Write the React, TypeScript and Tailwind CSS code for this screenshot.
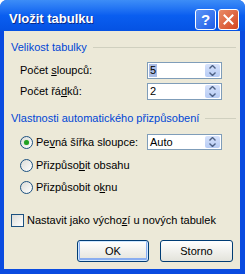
import React from "react";

const font = { fontFamily: '"Liberation Sans", Arial, sans-serif' };

function Spin({ value, selected, h }: { value: string; selected?: boolean; h: string }) {
  return (
    <div className={`ml-auto mr-[18px] flex w-[75px] ${h} border border-[#7f9db9] bg-white`}>
      <div className="flex flex-1 items-center pl-[1px] text-[11px] text-black">
        <span className={selected ? "bg-[#aabde6] px-[1px] leading-[13px]" : "px-[1px] leading-[13px]"}>{value}</span>
      </div>
      <div className="m-[1px] flex w-[15px] flex-col gap-0 overflow-hidden rounded-[2px] bg-gradient-to-b from-[#d6e2fb] to-[#b7ccf5]">
        <div className="flex flex-1 items-center justify-center">
          <svg width="7" height="4" viewBox="0 0 7 4">
            <path d="M0.5 3.5 L3.5 0.5 L6.5 3.5" fill="none" stroke="#4d6185" strokeWidth="1.4" />
          </svg>
        </div>
        <div className="flex flex-1 items-center justify-center">
          <svg width="7" height="4" viewBox="0 0 7 4">
            <path d="M0.5 0.5 L3.5 3.5 L6.5 0.5" fill="none" stroke="#4d6185" strokeWidth="1.4" />
          </svg>
        </div>
      </div>
    </div>
  );
}

function Radio({ checked }: { checked?: boolean }) {
  return (
    <div className="flex h-[13px] w-[13px] items-center justify-center rounded-full border border-[#1c5180] bg-gradient-to-br from-[#dcdcd7] to-white">
      {checked && <div className="h-[5px] w-[5px] rounded-full bg-[#21a121] shadow-[0_0_1px_#7fd07f]" />}
    </div>
  );
}

function Header({ children }: { children: React.ReactNode }) {
  return (
    <div className="flex h-[13px] items-center pl-[7px] pr-[4px]">
      <span className="text-[11px] leading-[13px] text-[#0046d5]">{children}</span>
      <div className="ml-[6px] h-[1px] flex-1 bg-[#d0d0bf]" />
    </div>
  );
}

export default function App() {
  return (
    <div style={font} className="h-[274px] w-[245px] overflow-hidden rounded-t-[7px] bg-[#0a4be0]">
      {/* Title bar */}
      <div className="flex h-[31px] items-center bg-gradient-to-b from-[#3d8df7] via-[#0a5ef0] to-[#0552e3] pl-[9px] pr-[6px] pt-[7px]">
        <span className="text-[13px] font-bold leading-[16px] text-white [text-shadow:1px_1px_0_#0a2a8a]">Vložit tabulku</span>
        <div className="ml-auto flex gap-[2px]">
          <div className="flex h-[21px] w-[21px] items-center justify-center rounded-[3px] border border-white bg-gradient-to-br from-[#5c94f7] to-[#1f5ce6] text-[15px] font-bold leading-none text-white">
            ?
          </div>
          <div className="flex h-[21px] w-[21px] items-center justify-center rounded-[3px] border border-white bg-gradient-to-br from-[#e88a66] to-[#d4431c]">
            <svg width="11" height="11" viewBox="0 0 11 11">
              <path d="M1.5 1.5 L9.5 9.5 M9.5 1.5 L1.5 9.5" stroke="white" strokeWidth="2" strokeLinecap="square" />
            </svg>
          </div>
        </div>
      </div>
      {/* Client */}
      <div className="ml-[4px] flex h-[238px] w-[236px] flex-col bg-[#ece9d8] text-[11px] text-black">
        <div className="mt-[10px]">
          <Header>Velikost tabulky</Header>
        </div>
        <div className="mt-[8px] flex h-[17px] items-center pl-[16px]">
          <span>Počet <u>s</u>loupců:</span>
          <Spin value="5" selected h="h-[17px]" />
        </div>
        <div className="mt-[4px] flex h-[17px] items-center pl-[16px]">
          <span>Počet řá<u>d</u>ků:</span>
          <Spin value="2" h="h-[17px]" />
        </div>
        <div className="mt-[12px]">
          <Header>Vlastnosti automatického přizpůsobení</Header>
        </div>
        <div className="mt-[9px] flex h-[16px] items-center pl-[16px]">
          <Radio checked />
          <span className="ml-[3px]">Pe<u>v</u>ná šířka sloupce:</span>
          <Spin value="Auto" h="h-[16px]" />
        </div>
        <div className="mt-[7px] flex h-[16px] items-center pl-[16px]">
          <Radio />
          <span className="ml-[3px]">Přizpůso<u>b</u>it obsahu</span>
        </div>
        <div className="mt-[6px] flex h-[16px] items-center pl-[16px]">
          <Radio />
          <span className="ml-[3px]">Přizpůsobit o<u>k</u>nu</span>
        </div>
        <div className="mt-[19px] flex h-[13px] items-center pl-[7px]">
          <div className="h-[13px] w-[13px] border border-[#1c5180] bg-gradient-to-br from-[#dcdcd7] to-white" />
          <span className="ml-[3px]">Nastavit jako výcho<u>z</u>í u nových tabulek</span>
        </div>
        <div className="mt-[13px] flex justify-end gap-[11px] pr-[7px]">
          <div className="flex h-[22px] w-[72px] items-center justify-center rounded-[3px] border border-[#003c74] bg-gradient-to-b from-white to-[#e3e3db] shadow-[inset_0_0_0_1px_#cee7ff,inset_0_-1px_0_2px_#89adf0]">
            OK
          </div>
          <div className="flex h-[22px] w-[73px] items-center justify-center rounded-[3px] border border-[#003c74] bg-gradient-to-b from-white to-[#e3e3db]">
            Storno
          </div>
        </div>
      </div>
    </div>
  );
}
